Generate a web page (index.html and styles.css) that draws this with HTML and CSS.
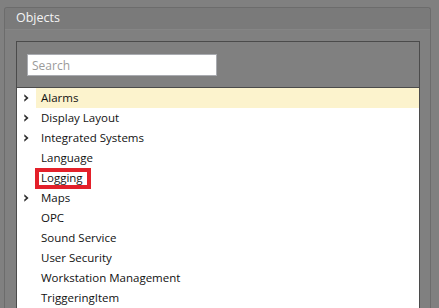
FILE: index.html
```html
<!DOCTYPE html>
<html>
<head>
<meta charset="utf-8">
<link rel="stylesheet" href="styles.css">
</head>
<body>
<div class="panel">
  <div class="panel-header">Objects</div>
  <div class="panel-body">
    <div class="inner">
      <div class="search-area">
        <input class="search" type="text" placeholder="Search">
      </div>
      <div class="tree">
        <div class="row"><span class="toggle"><svg width="5" height="8" viewBox="0 0 5 8"><path d="M0.3 0.3 L4.6 4 L0.3 7.7 L0.3 5.6 L2.2 4 L0.3 2.4 Z" fill="#2e2e2e"/></svg></span><span class="label selected">Alarms</span></div>
        <div class="row"><span class="toggle"><svg width="5" height="8" viewBox="0 0 5 8"><path d="M0.3 0.3 L4.6 4 L0.3 7.7 L0.3 5.6 L2.2 4 L0.3 2.4 Z" fill="#2e2e2e"/></svg></span><span class="label">Display Layout</span></div>
        <div class="row"><span class="toggle"><svg width="5" height="8" viewBox="0 0 5 8"><path d="M0.3 0.3 L4.6 4 L0.3 7.7 L0.3 5.6 L2.2 4 L0.3 2.4 Z" fill="#2e2e2e"/></svg></span><span class="label">Integrated Systems</span></div>
        <div class="row"><span class="toggle"></span><span class="label">Language</span></div>
        <div class="row"><span class="toggle"></span><span class="label"><span class="marked">Logging</span></span></div>
        <div class="row"><span class="toggle"><svg width="5" height="8" viewBox="0 0 5 8"><path d="M0.3 0.3 L4.6 4 L0.3 7.7 L0.3 5.6 L2.2 4 L0.3 2.4 Z" fill="#2e2e2e"/></svg></span><span class="label">Maps</span></div>
        <div class="row"><span class="toggle"></span><span class="label">OPC</span></div>
        <div class="row"><span class="toggle"></span><span class="label">Sound Service</span></div>
        <div class="row"><span class="toggle"></span><span class="label">User Security</span></div>
        <div class="row"><span class="toggle"></span><span class="label">Workstation Management</span></div>
        <div class="row"><span class="toggle"></span><span class="label">TriggeringItem</span></div>
      </div>
    </div>
  </div>
</div>
</body>
</html>
```

FILE: styles.css
```css
html, body {
  margin: 0;
  padding: 0;
  background: #808080;
  overflow: hidden;
  height: 308px;
}
body {
  font-family: "Open Sans", "Noto Sans", sans-serif;
  font-size: 11.5px;
  padding-top: 7px;
  box-sizing: border-box;
}
.panel {
  margin-left: 4px;
  width: 425px;
  height: 301px;
  border: 1px solid #6c6c6c;
  border-bottom: none;
  border-radius: 3px 3px 0 0;
  background: #808080;
  overflow: hidden;
}
.panel-header {
  height: 21px;
  background: #7a7a7a;
  border-bottom: 1px solid #858585;
  border-radius: 3px 3px 0 0;
  color: #f4f4f4;
  font-size: 12.5px;
  line-height: 20px;
  padding-left: 11px;
}
.panel-body {
  padding: 11px 10px 0 11px;
}
.inner {
  border: 1px solid #4b4b4b;
  border-bottom: none;
  height: 267px;
  background: #808080;
  overflow: hidden;
}
.search-area {
  height: 46px;
  border-bottom: 1px solid #4b4b4b;
  padding: 12px 0 0 10px;
  box-sizing: border-box;
}
.search {
  display: block;
  box-sizing: border-box;
  width: 190px;
  height: 22px;
  margin: 0;
  border: 1px solid #a9abb0;
  background: #fff;
  font-family: inherit;
  font-size: 12px;
  padding: 0 0 0 4px;
  outline: none;
}
.search::placeholder {
  color: #9a9a9a;
}
.tree {
  background: #fff;
  height: 230px;
}
.row {
  display: flex;
  height: 20px;
  align-items: stretch;
}
.toggle {
  width: 19px;
  display: flex;
  align-items: center;
  justify-content: flex-end;
  box-sizing: border-box;
}
.toggle svg {
  display: block;
  margin-right: 7px;
}
.label {
  flex: 1;
  padding-left: 5px;
  color: #111;
  line-height: 20px;
  white-space: nowrap;
}
.selected {
  background: #fcf3cd;
}
.marked {
  position: relative;
}
.marked::after {
  content: "";
  position: absolute;
  left: -6px;
  right: -8px;
  top: -2px;
  bottom: -4px;
  border: 4px solid #e3202a;
}
```
